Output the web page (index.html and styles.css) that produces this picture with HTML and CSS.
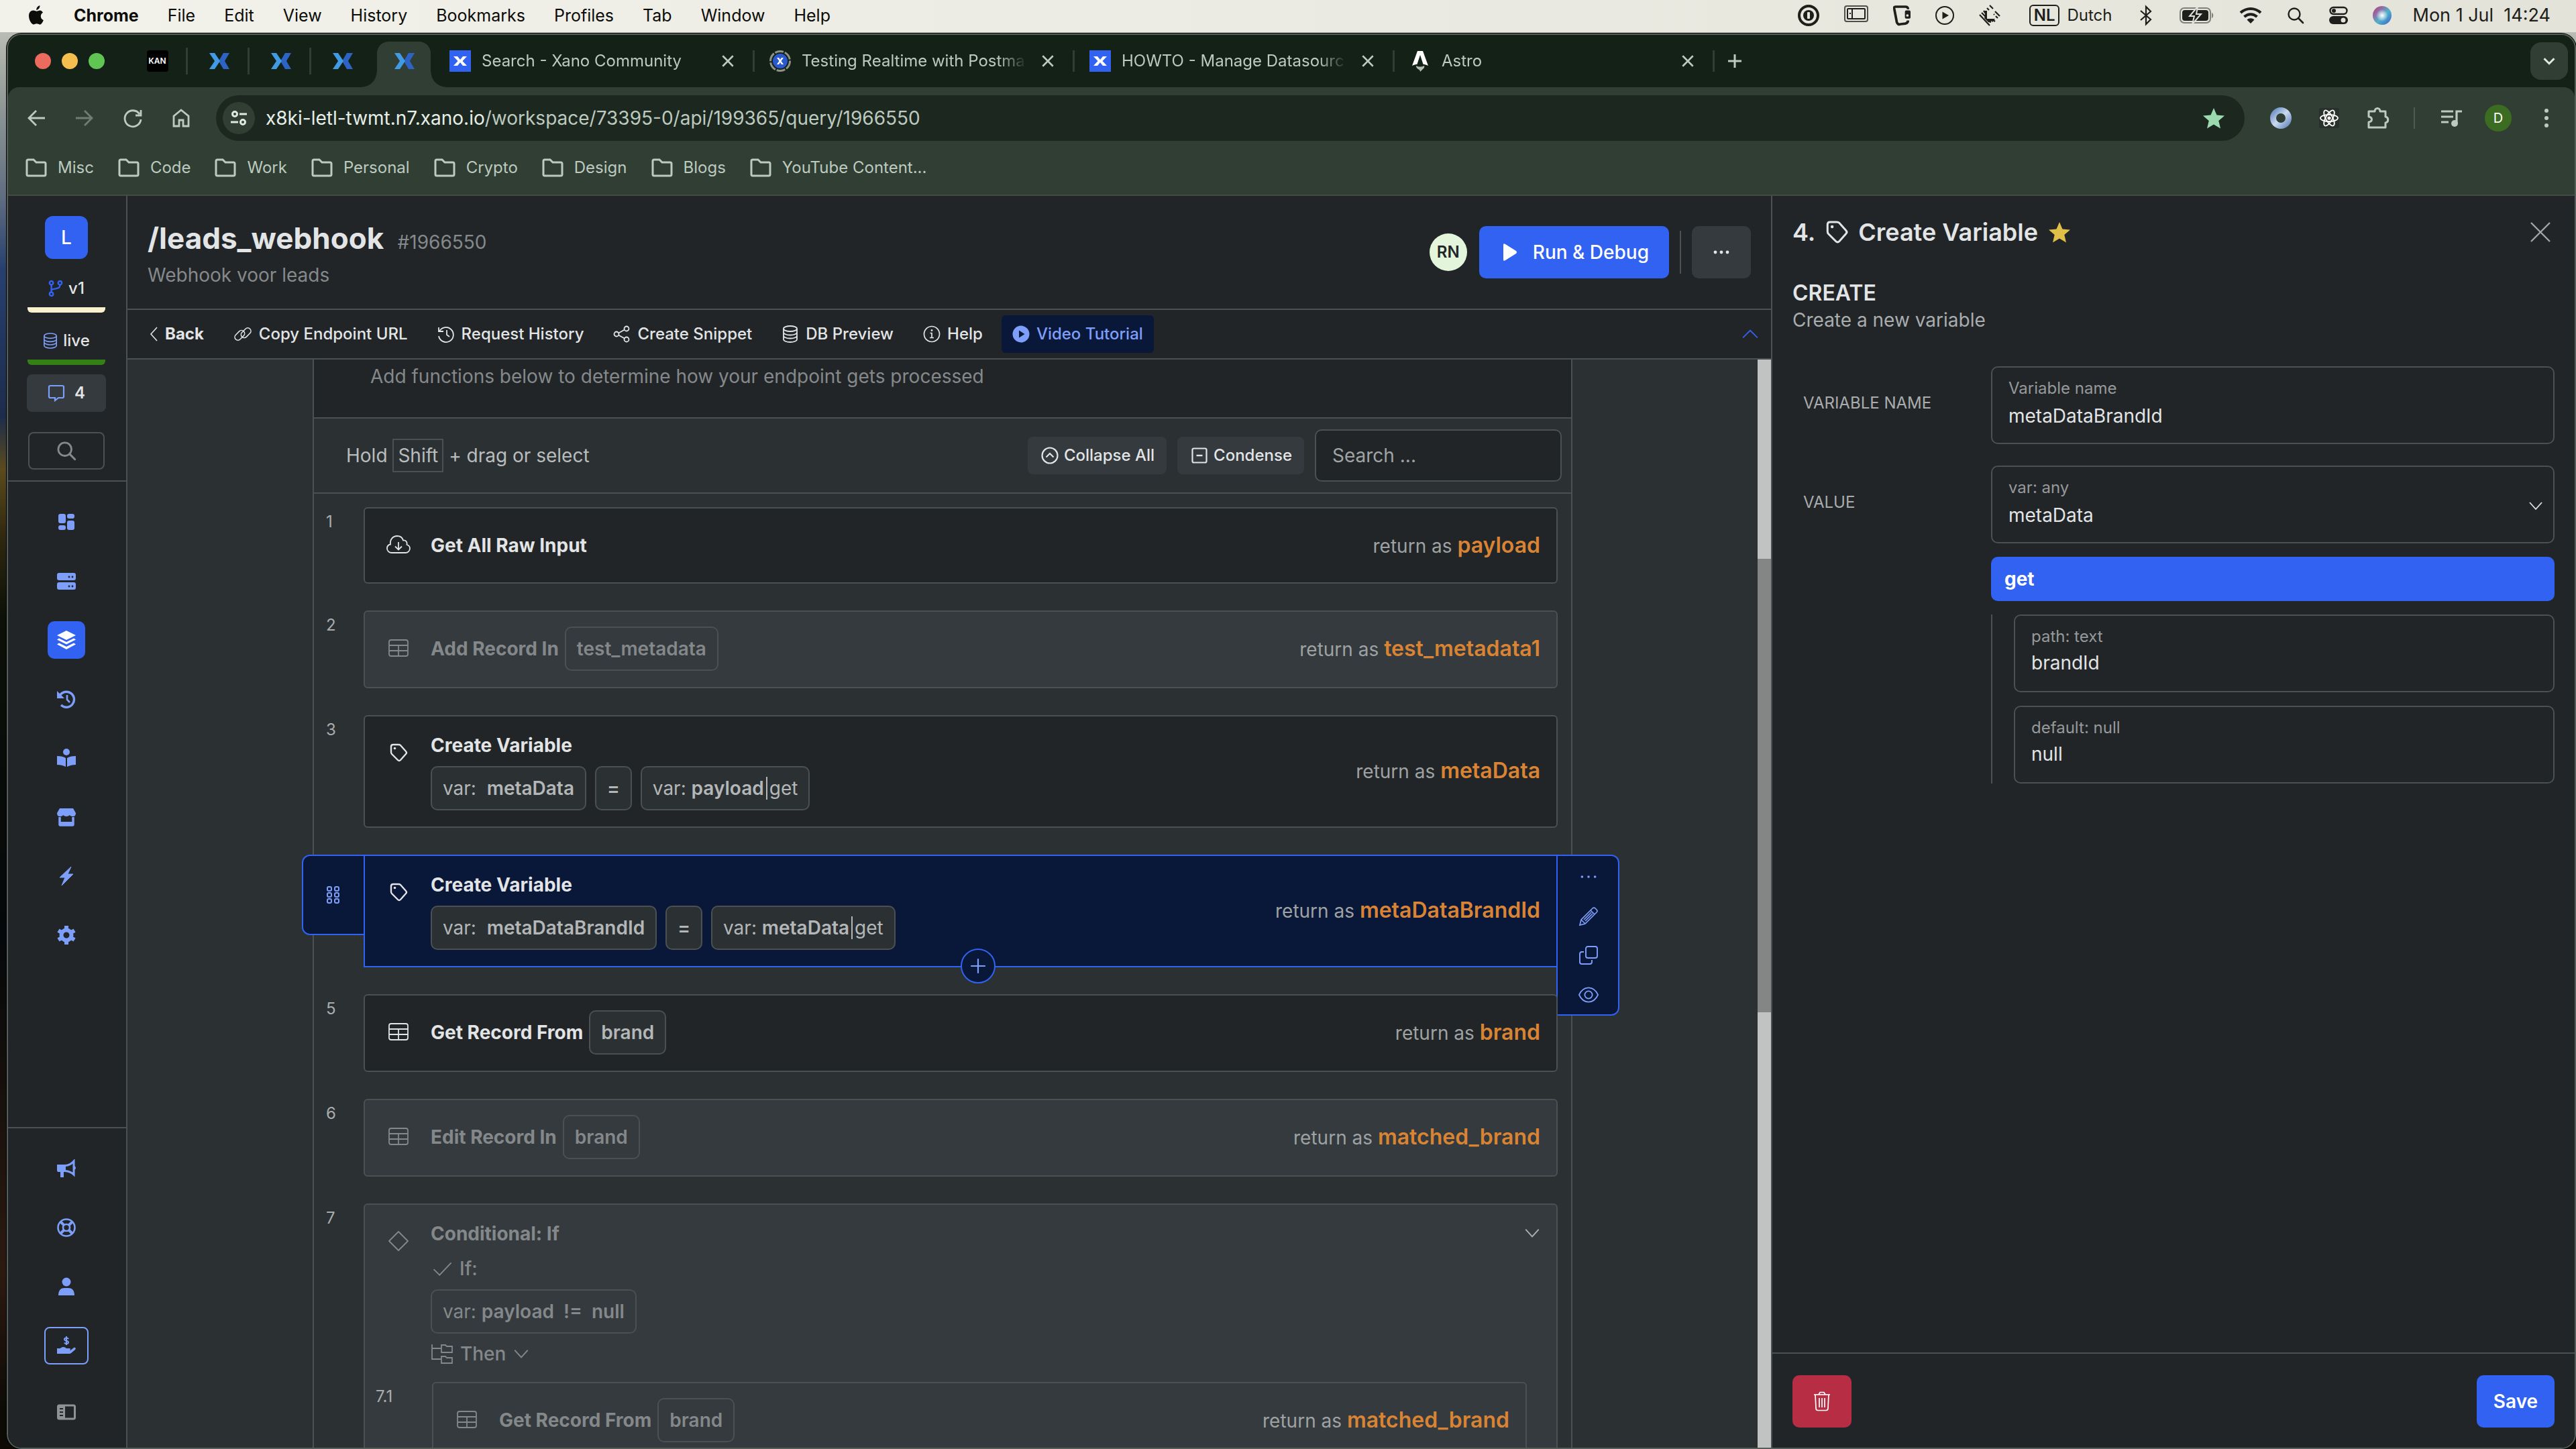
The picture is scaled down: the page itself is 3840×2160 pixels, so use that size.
FILE: index.html
```html
<!DOCTYPE html>
<html lang="en">
<head>
<meta charset="utf-8">
<title>/leads_webhook</title>
<link rel="stylesheet" href="styles.css">
</head>
<body>
<svg class="sprite" aria-hidden="true">
  <defs>
    <linearGradient id="siri-fill" x1="0" y1="0" x2="1" y2="1"><stop offset="0" stop-color="#c0356f"/><stop offset=".3" stop-color="#8f6fa8"/><stop offset=".55" stop-color="#4fb3c8"/><stop offset="1" stop-color="#3b5fd0"/></linearGradient>
    <radialGradient id="siri-glow"><stop offset="0" stop-color="#fff"/><stop offset="1" stop-color="#fff" stop-opacity="0"/></radialGradient>
    <linearGradient id="ring-fill" x1="0" y1="0" x2="1" y2="1"><stop offset="0" stop-color="#6d8fc4"/><stop offset=".5" stop-color="#c9daf0"/><stop offset="1" stop-color="#6f90c2"/></linearGradient>
  </defs>
  <symbol id="i-apple" viewBox="0 0 24 30"><path d="M17.6 7.4c-2.200 0-3.600 1.300-5 1.300S9.500 7.500 7.500 7.500C4.200 7.500 1 10.300 1 15.600 1 22 5 28.500 8 28.500c1.700 0 2.600-1.200 4.700-1.200s2.900 1.200 4.700 1.200c2.300 0 4.500-3.800 5.400-6.600-2.600-1-4-3.100-4-5.700 0-2.400 1.200-4.200 3.200-5.400-1.100-1.800-2.700-3.400-4.400-3.400zM12.300 7c-.2-3.300 2.200-6.200 5.100-6.700.4 3.200-2.300 6.500-5.100 6.700z" fill="currentColor"/></symbol>
  <symbol id="i-onepass" viewBox="0 0 32 32"><circle cx="16" cy="16" r="14" fill="none" stroke="currentColor" stroke-width="4"/><circle cx="16" cy="16" r="8" fill="currentColor"/><rect x="14" y="11" width="4" height="10" rx="1" fill="#e5e5dd"/></symbol>
  <symbol id="i-stage" viewBox="0 0 36 32"><g fill="none" stroke="currentColor" stroke-width="2"><rect x="1" y="2" width="34" height="23" rx="3" opacity=".75"/><rect x="5" y="6" width="26" height="15" rx="1"/><path d="M12 6v15M8 13h2"/></g></symbol>
  <symbol id="i-clip" viewBox="0 0 28 32"><path d="M24 6c0-3-1-4-4-4H4C2 2 1 3 2 6l4 21c1 3 3 4 6 3l8-1c3-1 4-2 4-5" fill="none" stroke="currentColor" stroke-width="4"/><rect x="19" y="8" width="9" height="13" rx="2" fill="currentColor"/><circle cx="23" cy="16" r="2" fill="#e5e5dd"/></symbol>
  <symbol id="i-playc" viewBox="0 0 28 28"><circle cx="14" cy="14" r="13" fill="none" stroke="currentColor" stroke-width="2"/><path d="M10.500 8.500v11l9.500-5.500z" fill="currentColor"/></symbol>
  <symbol id="i-dither" viewBox="0 0 32 32"><path d="M16 1l5 5M12 5l3 3M24 10l7 7M22 14l1 1M25 17l3 3M20 22l4 3M1 15l15 16M4 12l6 6M7 9l3 4" fill="none" stroke="currentColor" stroke-width="2.200"/><path d="M9 9h3v12h12l-4 5-2-2v3l-4-1-6-6 1-3z" fill="currentColor"/></symbol>
  <symbol id="i-bt" viewBox="0 0 26 32"><path d="M5 9l15 13-7 7V3l7 7L5 23" fill="none" stroke="currentColor" stroke-width="2.200"/></symbol>
  <symbol id="i-batt" viewBox="0 0 52 26"><rect x="1" y="2" width="45" height="22" rx="6" fill="none" stroke="currentColor" stroke-width="2" opacity=".5"/><rect x="4" y="5" width="39" height="16" rx="4" fill="currentColor"/><path d="M48 9c3 1 3 7 0 8z" fill="currentColor" opacity=".5"/><path d="M27 0L15 14h7l-3 12 13-15h-7z" fill="currentColor" stroke="#e2e2da" stroke-width="2"/></symbol>
  <symbol id="i-wifi" viewBox="0 0 34 26"><path d="M2 9c9-8 21-8 30 0M7.500 15c6-5 13-5 19 0" fill="none" stroke="currentColor" stroke-width="4.200"/><path d="M11.500 19.500c3-3 8-3 11 0L17 25z" fill="currentColor"/></symbol>
  <symbol id="i-search" viewBox="0 0 26 26"><circle cx="11" cy="11" r="8.500" fill="none" stroke="currentColor" stroke-width="2.400"/><path d="M17 17l7 7" stroke="currentColor" stroke-width="2.600" stroke-linecap="round"/></symbol>
  <symbol id="i-control" viewBox="0 0 28 28"><rect x="1.500" y="2" width="25" height="10" rx="5" fill="none" stroke="currentColor" stroke-width="2.400"/><circle cx="7" cy="7" r="3" fill="currentColor"/><rect x="0" y="15" width="28" height="12" rx="6" fill="currentColor"/><circle cx="21" cy="21" r="3.500" fill="#e2e2da"/></symbol>
  <symbol id="i-siri" viewBox="0 0 28 28"><circle cx="14" cy="14" r="14" fill="url(#siri-fill)"/><circle cx="14" cy="14" r="9" fill="url(#siri-glow)"/></symbol>
  <symbol id="i-xano" viewBox="0 0 32 32"><path d="M31 4h-9l-7 12 7 12h9l-7-12z" fill="#2d63c4"/><path d="M1 4h8l8 12-8 12H1l8-12z" fill="#419be4"/></symbol>
  <symbol id="i-xwhite" viewBox="0 0 32 32"><path d="M6 9h6l4 5 4-5h6l-6.500 7 6.500 7h-6l-4-5-4 5H6l6.500-7z" fill="#fff"/></symbol>
  <symbol id="i-badge" viewBox="0 0 32 32"><circle cx="16" cy="16" r="14.500" fill="none" stroke="#8f9387" stroke-width="3" stroke-dasharray="13 2"/><circle cx="16" cy="16" r="11" fill="#2b5ad0"/><path d="M11 11h3l2 3 2-3h3l-3.500 5 3.500 5h-3l-2-3-2 3h-3l3.500-5z" fill="#fff"/></symbol>
  <symbol id="i-astro" viewBox="0 0 26 32"><path d="M9 1h8l8 22c-3-1.500-5-2-7.500-2.300L13 7 8.500 20.700C6 21 4 21.500 1 23z" fill="#fff"/><path d="M7 23c4 2 8 2 12 0 1 3-1 4-3 6l-3 3c0-2-1-3-3-4s-3-3-3-5z" fill="#b8bcb9"/></symbol>
  <symbol id="i-close" viewBox="0 0 20 20"><path d="M3 3l14 14M17 3L3 17" stroke="currentColor" stroke-width="2.400"/></symbol>
  <symbol id="i-thinx" viewBox="0 0 30 30"><path d="M1 1l28 28M29 1L1 29" stroke="currentColor" stroke-width="2.400"/></symbol>
  <symbol id="i-plus" viewBox="0 0 24 24"><path d="M12 2v20M2 12h20" stroke="currentColor" stroke-width="2"/></symbol>
  <symbol id="i-boldplus" viewBox="0 0 24 24"><path d="M12 2v20M2 12h20" stroke="currentColor" stroke-width="3"/></symbol>
  <symbol id="i-down" viewBox="0 0 24 24"><path d="M3 7l9 10 9-10" fill="none" stroke="currentColor" stroke-width="1.800"/></symbol>
  <symbol id="i-bolddown" viewBox="0 0 24 24"><path d="M2 7l10 10L22 7" fill="none" stroke="currentColor" stroke-width="4"/></symbol>
  <symbol id="i-up" viewBox="0 0 24 24"><path d="M2 17L12 7l10 10" fill="none" stroke="currentColor" stroke-width="1.800"/></symbol>
  <symbol id="i-left" viewBox="0 0 14 24"><path d="M12 2L3 12l9 10" fill="none" stroke="currentColor" stroke-width="1.600"/></symbol>
  <symbol id="i-arrow" viewBox="0 0 32 32"><path d="M29 16H5M16 5L5 16l11 11" fill="none" stroke="currentColor" stroke-width="2.800"/></symbol>
  <symbol id="i-reload" viewBox="0 0 32 32"><path d="M26 10a12 12 0 1 0 2 8M28 4v8h-8" fill="none" stroke="currentColor" stroke-width="2.800"/></symbol>
  <symbol id="i-home" viewBox="0 0 32 32"><path d="M5 13L16 4l11 9v15h-8v-9h-6v9H5z" fill="none" stroke="currentColor" stroke-width="2.800"/></symbol>
  <symbol id="i-tune" viewBox="0 0 28 28"><g fill="none" stroke="currentColor" stroke-width="3"><circle cx="8" cy="8" r="3.500"/><path d="M15 8h11M2 20h11"/><circle cx="20" cy="20" r="3.500"/></g></symbol>
  <symbol id="i-star" viewBox="0 0 32 32"><path d="M16 1l4.500 10.600L32 12.600l-8.700 7.500L26 31.500l-10-6-10 6 2.700-11.400L0 12.600l11.500-1z" fill="currentColor"/></symbol>
  <symbol id="i-ring" viewBox="0 0 36 36"><circle cx="18" cy="18" r="11.500" fill="none" stroke="url(#ring-fill)" stroke-width="9"/></symbol>
  <symbol id="i-react" viewBox="0 0 36 36"><rect x="3" y="3" width="30" height="30" rx="3" fill="#2a302c"/><g fill="none" stroke="#fff" stroke-width="1.800"><ellipse cx="18" cy="18" rx="13" ry="5"/><ellipse cx="18" cy="18" rx="13" ry="5" transform="rotate(60 18 18)"/><ellipse cx="18" cy="18" rx="13" ry="5" transform="rotate(120 18 18)"/></g><circle cx="18" cy="18" r="2.600" fill="#fff"/></symbol>
  <symbol id="i-puzzle" viewBox="0 0 36 36"><path d="M5 8h9c0-6 8-6 8 0h8v8c5 1 5 8 0 9v7H5v-8c6-1 6-7 0-8z" fill="none" stroke="currentColor" stroke-width="3" stroke-linejoin="round"/></symbol>
  <symbol id="i-music" viewBox="0 0 36 36"><path d="M3 8h18M3 16h18M3 24h11M26 26V8h8" fill="none" stroke="currentColor" stroke-width="3.200"/><circle cx="23" cy="26" r="5" fill="currentColor"/></symbol>
  <symbol id="i-vdots" viewBox="0 0 28 32"><g fill="currentColor"><circle cx="14" cy="5" r="3"/><circle cx="14" cy="16" r="3"/><circle cx="14" cy="27" r="3"/></g></symbol>
  <symbol id="i-folder" viewBox="0 0 32 28"><path d="M2 24V4q0-2 2-2h8l4 4h12q2 0 2 2v16q0 2-2 2H4q-2 0-2-2z" fill="none" stroke="currentColor" stroke-width="3"/></symbol>

  <symbol id="i-branch" viewBox="0 0 24 28"><g fill="none" stroke="currentColor" stroke-width="2.600"><circle cx="5" cy="5" r="3"/><circle cx="19" cy="5" r="3"/><circle cx="5" cy="23" r="3"/><path d="M5 8v12M19 8c0 8-7 5-14 8"/></g></symbol>
  <symbol id="i-db" viewBox="0 0 24 26"><g fill="none" stroke="currentColor" stroke-width="1.800"><ellipse cx="12" cy="5" rx="10" ry="4"/><path d="M2 5v16c0 2 4 4 10 4s10-2 10-4V5M2 10.500c0 2 4 4 10 4s10-2 10-4M2 15.500c0 2 4 4 10 4s10-2 10-4"/></g></symbol>
  <symbol id="i-chat" viewBox="0 0 26 26"><path d="M4 2h18q2 0 2 2v14q0 2-2 2h-6l-5 4v-4H4q-2 0-2-2V4q0-2 2-2z" fill="none" stroke="currentColor" stroke-width="2.200"/></symbol>
  <symbol id="i-dash" viewBox="0 0 28 28"><g fill="currentColor"><rect x="2" y="2" width="11" height="14" rx="3"/><rect x="2" y="19" width="11" height="7" rx="3"/><rect x="15" y="2" width="11" height="7" rx="3"/><rect x="15" y="12" width="11" height="14" rx="3"/></g></symbol>
  <symbol id="i-server" viewBox="0 0 28 28"><rect y="2" width="28" height="11" rx="3" fill="currentColor"/><rect y="16" width="28" height="11" rx="3" fill="currentColor"/><g fill="#212527"><circle cx="18" cy="8" r="1.400"/><circle cx="23" cy="8" r="1.400"/><circle cx="18" cy="22" r="1.400"/><circle cx="23" cy="22" r="1.400"/></g></symbol>
  <symbol id="i-layers" viewBox="0 0 28 28"><g fill="currentColor"><path d="M14 0l14 7-14 7L0 7z"/><path d="M3 11.500l11 5.500 11-5.500 3 2-14 7-14-7z"/><path d="M3 18.500L14 24l11-5.500 3 2-14 7.500-14-7.500z"/></g></symbol>
  <symbol id="i-history" viewBox="0 0 28 28"><path d="M4 9a11.500 11.500 0 1 1 2 14" fill="none" stroke="currentColor" stroke-width="3.400"/><path d="M0 2v11h11z" fill="currentColor"/><path d="M15 8v7l4 4" fill="none" stroke="currentColor" stroke-width="2.600"/></symbol>
  <symbol id="i-reader" viewBox="0 0 28 28"><g fill="currentColor"><circle cx="14" cy="5" r="5"/><path d="M13 14v13C9 25 5 24 0 24V11c6 0 10 1 13 3zM15 14v13c4-2 8-3 13-3V11c-6 0-10 1-13 3z"/></g></symbol>
  <symbol id="i-store" viewBox="0 0 28 28"><path d="M4 1h20l4 7q0 5-4 5t-5-2q-2 2-5 2t-5-2q-1 2-5 2t-4-5z" fill="currentColor"/><path d="M4 14v11q0 1 1 1h18q1 0 1-1V14" fill="none" stroke="currentColor" stroke-width="3.500"/><path d="M4 21h20v4H4z" fill="currentColor"/></symbol>
  <symbol id="i-bolt" viewBox="0 0 28 28"><path d="M21 0L4 16h8L7 28l17-17h-8z" fill="currentColor" stroke="currentColor" stroke-linejoin="round"/></symbol>
  <symbol id="i-gear" viewBox="0 0 28 28"><circle cx="14" cy="14" r="7.500" fill="none" stroke="currentColor" stroke-width="6"/><path d="M14 0v5M14 23v5M2 7l4 2.500M22 18.500l4 2.500M2 21l4-2.500M22 9.500L26 7" stroke="currentColor" stroke-width="6"/></symbol>
  <symbol id="i-horn" viewBox="0 0 28 28"><path d="M0 8h13v11h-3v8H5v-8H2q-2 0-2-3z" fill="currentColor"/><path d="M12 9.500Q20 9 25 3v20q-5-5-13-5.500" fill="none" stroke="currentColor" stroke-width="3"/><path d="M26 10q4 3 0 6z" fill="currentColor"/></symbol>
  <symbol id="i-ringbuoy" viewBox="0 0 28 28"><g fill="none" stroke="currentColor" stroke-width="2.600"><circle cx="14" cy="14" r="12.500"/><circle cx="14" cy="14" r="5"/><path d="M5 5l5.500 5.500M23 5l-5.500 5.500M5 23l5.500-5.500M23 23l-5.500-5.500" stroke-width="4"/></g></symbol>
  <symbol id="i-user" viewBox="0 0 28 28"><circle cx="14" cy="7" r="6.500" fill="currentColor"/><path d="M2 27c0-8 4-11 9-11h6c5 0 9 3 9 11z" fill="currentColor"/></symbol>
  <symbol id="i-handusd" viewBox="0 0 28 28"><path d="M0 18h5c3-3 7-2 9 0h5c2 1 1 3-1 3h-5 7l5-4c2-1 4 1 2 3l-6 5q-1 1-3 1H0z" fill="currentColor"/><path d="M17 4c-1-2-6-2-6 .5 0 3 6 1.500 6 4.500 0 2.500-5 2.500-6 .5M14 0v13" fill="none" stroke="currentColor" stroke-width="2"/></symbol>
  <symbol id="i-sidebar" viewBox="0 0 28 26"><rect x="1.500" y="3" width="25" height="20" rx="2" fill="none" stroke="currentColor" stroke-width="3"/><rect x="1" y="2" width="11" height="22" fill="currentColor"/><path d="M4 8h5M4 13h5M4 18h5" stroke="#212527" stroke-width="2"/></symbol>

  <symbol id="i-link" viewBox="0 0 30 26"><g fill="none" stroke="currentColor" stroke-width="1.700"><rect x="-9" y="-5" width="18" height="10" rx="5" transform="translate(10 15) rotate(-45)"/><rect x="-9" y="-5" width="18" height="10" rx="5" transform="translate(20 11) rotate(-45)"/></g></symbol>
  <symbol id="i-hist" viewBox="0 0 26 26"><path d="M2 3v6h7M3 9a11 11 0 1 1-1 7M14 7v7l4 3" fill="none" stroke="currentColor" stroke-width="1.800"/></symbol>
  <symbol id="i-share" viewBox="0 0 26 26"><g fill="none" stroke="currentColor" stroke-width="1.800"><circle cx="5" cy="13" r="3.500"/><circle cx="20" cy="5" r="3.500"/><circle cx="20" cy="21" r="3.500"/><path d="M8 11.500l9-5M8 14.500l9 5"/></g></symbol>
  <symbol id="i-info" viewBox="0 0 26 26"><circle cx="13" cy="13" r="11.500" fill="none" stroke="currentColor" stroke-width="1.700"/><path d="M10.500 11.500H13V18M10 18.500h6" fill="none" stroke="currentColor" stroke-width="1.700"/><circle cx="13" cy="7.500" r="1.400" fill="currentColor"/></symbol>
  <symbol id="i-playfill" viewBox="0 0 26 26"><circle cx="13" cy="13" r="12.500" fill="currentColor"/><path d="M10 7.500v11l8.500-5.500z" fill="#091739"/></symbol>
  <symbol id="i-play" viewBox="0 0 24 28"><path d="M2 3q0-3 3-1l16 10q2 2 0 4L5 26q-3 2-3-1z" fill="currentColor"/></symbol>
  <symbol id="i-dots" viewBox="0 0 28 8"><g fill="currentColor"><circle cx="5" cy="4" r="2.400"/><circle cx="14" cy="4" r="2.400"/><circle cx="23" cy="4" r="2.400"/></g></symbol>
  <symbol id="i-finedots" viewBox="0 0 28 8"><g fill="currentColor"><circle cx="5" cy="4" r="1.700"/><circle cx="14" cy="4" r="1.700"/><circle cx="23" cy="4" r="1.700"/></g></symbol>
  <symbol id="i-upc" viewBox="0 0 26 26"><circle cx="13" cy="13" r="11.500" fill="none" stroke="currentColor" stroke-width="2.200"/><path d="M7.500 15.500L13 10l5.500 5.500" fill="none" stroke="currentColor" stroke-width="2.200"/></symbol>
  <symbol id="i-minus" viewBox="0 0 26 26"><rect x="2.500" y="2.500" width="21" height="21" rx="2" fill="none" stroke="currentColor" stroke-width="2.200"/><path d="M8.500 13h9" stroke="currentColor" stroke-width="2.400"/></symbol>
  <symbol id="i-cloud" viewBox="0 0 36 32"><path d="M8 28c-4 0-7-3-7-6.500 0-3 2-5.500 5-6C5 8 10 3 16 3c5 0 8 3 9 6.500 4-.5 6.500 2.500 5.500 6.500 3 1 4.500 3 4.500 5.500 0 3.500-3 6.500-6.500 6.500zM18 12v11M13 18.500l5 5 5-5" fill="none" stroke="currentColor" stroke-width="1.800"/></symbol>
  <symbol id="i-table" viewBox="0 0 32 32"><path d="M5 4h22q3 0 3 3v18q0 3-3 3H5q-3 0-3-3V7q0-3 3-3zM2 12h28M2 20h28M16 12v16" fill="none" stroke="currentColor" stroke-width="1.800"/></symbol>
  <symbol id="i-tag" viewBox="0 0 32 32"><path d="M5 7q0-3 3-3h8q2 0 3 1l8 9q2 2 0 4l-8 9q-2 2-4 0l-9-9q-1-1-1-3z" fill="none" stroke="currentColor" stroke-width="2.400"/><circle cx="10.500" cy="9.500" r="1.800" fill="currentColor"/></symbol>
  <symbol id="i-diamond" viewBox="0 0 32 32"><path d="M16 2l14 14-14 14L2 16z" fill="none" stroke="currentColor" stroke-width="1.800" stroke-linejoin="round"/></symbol>
  <symbol id="i-check" viewBox="0 0 30 24"><path d="M4 13l8 8L28 4" fill="none" stroke="currentColor" stroke-width="1.700"/></symbol>
  <symbol id="i-tree" viewBox="0 0 34 32"><path d="M2 2v22h13M2 8h13M16 3h6l2 2h8v9H16zM16 20h6l2 2h8v8H16z" fill="none" stroke="currentColor" stroke-width="1.800"/></symbol>
  <symbol id="i-grip" viewBox="0 0 20 28"><g fill="none" stroke="currentColor" stroke-width="2"><rect x="1" y="2" width="6" height="6" rx="2"/><rect x="12" y="2" width="6" height="6" rx="2"/><rect x="1" y="11" width="6" height="6" rx="2"/><rect x="12" y="11" width="6" height="6" rx="2"/><rect x="1" y="20" width="6" height="6" rx="2"/><rect x="12" y="20" width="6" height="6" rx="2"/></g></symbol>
  <symbol id="i-pencil" viewBox="0 0 30 30"><path d="M2 28l2-8L21 3q2-2 4 0l2 2q2 2 0 4L10 26zM18 6l6 6M4 20l6 6M8 20L19 9M10 22l11-11" fill="none" stroke="currentColor" stroke-width="1.700"/></symbol>
  <symbol id="i-copy" viewBox="0 0 30 30"><g fill="none" stroke="currentColor" stroke-width="1.900"><rect x="11" y="2" width="17" height="17" rx="3"/><path d="M8 10H5q-3 0-3 3v12q0 3 3 3h12q3 0 3-3v-3"/></g></symbol>
  <symbol id="i-eye" viewBox="0 0 32 28"><path d="M1 14C8-1 24-1 31 14 24 29 8 29 1 14z" fill="none" stroke="currentColor" stroke-width="1.900"/><circle cx="16" cy="14" r="6" fill="none" stroke="currentColor" stroke-width="1.900"/></symbol>
  <symbol id="i-trash" viewBox="0 0 26 30"><path d="M1 5h24M8 5l2-3.500h6L18 5M3 5l1 20q0 3.500 3 3.500h12q3 0 3-3.500l1-20M9 10v14M13 10v14M17 10v14" fill="none" stroke="currentColor" stroke-width="1.700"/></symbol>
</svg>

<header class="menubar">
  <nav class="menus">
    <svg class="apple"><use href="#i-apple"/></svg>
    <strong>Chrome</strong><span>File</span><span>Edit</span><span>View</span><span>History</span><span>Bookmarks</span><span>Profiles</span><span>Tab</span><span>Window</span><span>Help</span>
  </nav>
  <div class="status">
    <svg class="w32"><use href="#i-onepass"/></svg>
    <svg class="w36"><use href="#i-stage"/></svg>
    <svg class="w26"><use href="#i-clip"/></svg>
    <svg class="w28"><use href="#i-playc"/></svg>
    <svg class="w32"><use href="#i-dither"/></svg>
    <span class="lang"><b>NL</b>Dutch</span>
    <svg class="w26"><use href="#i-bt"/></svg>
    <svg class="w52"><use href="#i-batt"/></svg>
    <svg class="w34"><use href="#i-wifi"/></svg>
    <svg class="w26"><use href="#i-search"/></svg>
    <svg class="w28"><use href="#i-control"/></svg>
    <span class="clock"><svg class="w28"><use href="#i-siri"/></svg><time>Mon 1 Jul&nbsp; 14:24</time></span>
  </div>
</header>

<div class="window">
  <div class="tabstrip">
    <div class="lights"><i class="red"></i><i class="yellow"></i><i class="green"></i></div>
    <div class="pin"><span class="kan">KAN</span></div>
    <div class="pin"><svg class="w32"><use href="#i-xano"/></svg></div>
    <div class="pin"><svg class="w32"><use href="#i-xano"/></svg></div>
    <div class="pin last"><svg class="w32"><use href="#i-xano"/></svg></div>
    <div class="pin active"><svg class="shape" viewBox="0 0 128 68"><path d="M0 68q22-2 24-24V16Q26 2 40 0h48q14 2 16 16v28q2 22 24 24z" fill="#303e34"/></svg><svg class="w32 front"><use href="#i-xano"/></svg></div>
    <div class="tab"><svg class="w32 bluebg"><use href="#i-xwhite"/></svg><span>Search - Xano Community</span><button aria-label="Close tab"><svg><use href="#i-close"/></svg></button></div>
    <div class="tab"><svg class="w32"><use href="#i-badge"/></svg><span>Testing Realtime with Postma</span><button aria-label="Close tab"><svg><use href="#i-close"/></svg></button></div>
    <div class="tab"><svg class="w32 bluebg"><use href="#i-xwhite"/></svg><span>HOWTO - Manage Datasourc</span><button aria-label="Close tab"><svg><use href="#i-close"/></svg></button></div>
    <div class="tab"><svg class="w32"><use href="#i-astro"/></svg><span>Astro</span><button aria-label="Close tab"><svg><use href="#i-close"/></svg></button></div>
    <button class="newtab" aria-label="New tab"><svg><use href="#i-boldplus"/></svg></button>
    <button class="tabsearch" aria-label="Search tabs"><svg><use href="#i-bolddown"/></svg></button>
  </div>

  <div class="chrome">
    <div class="addressrow">
      <div class="nav">
        <svg><use href="#i-arrow"/></svg><svg class="forward"><use href="#i-arrow"/></svg><svg><use href="#i-reload"/></svg><svg><use href="#i-home"/></svg>
      </div>
      <div class="omnibox">
        <span class="site"><svg><use href="#i-tune"/></svg></span>
        <span class="url"><em>x8ki-letl-twmt.n7.xano.io</em>/workspace/73395-0/api/199365/query/1966550</span>
        <svg class="fav"><use href="#i-star"/></svg>
      </div>
      <div class="ext">
        <svg><use href="#i-ring"/></svg><svg><use href="#i-react"/></svg><svg><use href="#i-puzzle"/></svg><i></i><svg><use href="#i-music"/></svg><span class="profile">D</span><svg class="kebab"><use href="#i-vdots"/></svg>
      </div>
    </div>
    <nav class="bookmarks">
      <a href="#"><svg><use href="#i-folder"/></svg>Misc</a><a href="#"><svg><use href="#i-folder"/></svg>Code</a><a href="#"><svg><use href="#i-folder"/></svg>Work</a><a href="#"><svg><use href="#i-folder"/></svg>Personal</a><a href="#"><svg><use href="#i-folder"/></svg>Crypto</a><a href="#"><svg><use href="#i-folder"/></svg>Design</a><a href="#"><svg><use href="#i-folder"/></svg>Blogs</a><a href="#"><svg><use href="#i-folder"/></svg>YouTube Content...</a>
    </nav>
  </div>

  <div class="app">
    <aside class="rail">
      <div class="railtop">
        <button class="space">L</button>
        <button class="env v1"><svg><use href="#i-branch"/></svg>v1</button>
        <button class="env live"><svg><use href="#i-db"/></svg>live</button>
        <button class="chat"><svg><use href="#i-chat"/></svg>4</button>
        <button class="find" aria-label="Search"><svg><use href="#i-search"/></svg></button>
      </div>
      <nav class="railnav">
        <a href="#" aria-label="Dashboard"><svg><use href="#i-dash"/></svg></a>
        <a href="#" aria-label="Database"><svg><use href="#i-server"/></svg></a>
        <a href="#" aria-label="API" class="on"><svg><use href="#i-layers"/></svg></a>
        <a href="#" aria-label="History"><svg><use href="#i-history"/></svg></a>
        <a href="#" aria-label="Library"><svg><use href="#i-reader"/></svg></a>
        <a href="#" aria-label="Marketplace"><svg><use href="#i-store"/></svg></a>
        <a href="#" aria-label="Triggers"><svg><use href="#i-bolt"/></svg></a>
        <a href="#" aria-label="Settings"><svg><use href="#i-gear"/></svg></a>
      </nav>
      <nav class="railnav foot">
        <a href="#" aria-label="News"><svg><use href="#i-horn"/></svg></a>
        <a href="#" aria-label="Support"><svg><use href="#i-ringbuoy"/></svg></a>
        <a href="#" aria-label="Account"><svg><use href="#i-user"/></svg></a>
        <a href="#" aria-label="Referrals" class="boxed"><svg><use href="#i-handusd"/></svg></a>
        <a href="#" aria-label="Toggle sidebar" class="grey"><svg><use href="#i-sidebar"/></svg></a>
      </nav>
    </aside>

    <main class="main">
      <header class="pagehead">
        <div class="titles">
          <h1>/leads_webhook <small>#1966550</small></h1>
          <p>Webhook voor leads</p>
        </div>
        <div class="headactions">
          <span class="avatar">RN</span>
          <button class="run"><svg><use href="#i-play"/></svg>Run &amp; Debug</button>
          <i></i>
          <button class="more" aria-label="More"><svg><use href="#i-dots"/></svg></button>
        </div>
      </header>

      <nav class="tools">
        <button class="back"><svg class="slim"><use href="#i-left"/></svg>Back</button>
        <button><svg class="wide"><use href="#i-link"/></svg>Copy Endpoint URL</button>
        <button><svg><use href="#i-hist"/></svg>Request History</button>
        <button><svg><use href="#i-share"/></svg>Create Snippet</button>
        <button><svg><use href="#i-db"/></svg>DB Preview</button>
        <button><svg><use href="#i-info"/></svg>Help</button>
        <button class="video"><svg><use href="#i-playfill"/></svg>Video Tutorial</button>
        <button class="fold" aria-label="Collapse"><svg><use href="#i-up"/></svg></button>
      </nav>

      <div class="canvas">
        <div class="scroller">
          <section class="stack">
            <p class="intro">Add functions below to determine how your endpoint gets processed</p>
            <div class="filter">
              <p>Hold <kbd>Shift</kbd> + drag or select</p>
              <button><svg><use href="#i-upc"/></svg>Collapse All</button>
              <button><svg><use href="#i-minus"/></svg>Condense</button>
              <input type="search" placeholder="Search ..." aria-label="Search functions">
            </div>

            <ol class="steps">
              <li class="step"><span class="num">1</span>
                <article class="card plain"><svg class="kind cloud"><use href="#i-cloud"/></svg><div class="body"><div class="line"><h2>Get All Raw Input</h2></div></div><p class="ret">return as <b>payload</b></p></article></li>
              <li class="step"><span class="num">2</span>
                <article class="card off"><svg class="kind"><use href="#i-table"/></svg><div class="body"><div class="line"><h2>Add Record In</h2><span class="chip"><b>test_metadata</b></span></div></div><p class="ret">return as <b>test_metadata1</b></p></article></li>
              <li class="step"><span class="num">3</span>
                <article class="card"><svg class="kind"><use href="#i-tag"/></svg><div class="body"><h2>Create Variable</h2><div class="chips"><span class="chip">var:&nbsp; <b>metaData</b></span><span class="chip"><b>=</b></span><span class="chip">var: <b>payload</b><i></i>get</span></div></div><p class="ret">return as <b>metaData</b></p></article></li>
              <li class="step"><span class="num"></span>
                <article class="card selected"><svg class="kind"><use href="#i-tag"/></svg><div class="body"><h2>Create Variable</h2><div class="chips"><span class="chip">var:&nbsp; <b>metaDataBrandId</b></span><span class="chip"><b>=</b></span><span class="chip">var: <b>metaData</b><i></i>get</span></div></div><p class="ret">return as <b>metaDataBrandId</b></p>
                  <button class="grip" aria-label="Drag"><svg><use href="#i-grip"/></svg></button>
                  <button class="add" aria-label="Add step"><svg><use href="#i-plus"/></svg></button>
                  <div class="actions">
                    <button aria-label="More"><svg><use href="#i-finedots"/></svg></button>
                    <button aria-label="Edit"><svg><use href="#i-pencil"/></svg></button>
                    <button aria-label="Duplicate"><svg><use href="#i-copy"/></svg></button>
                    <button aria-label="Disable"><svg><use href="#i-eye"/></svg></button>
                  </div>
                </article></li>
              <li class="step"><span class="num">5</span>
                <article class="card"><svg class="kind"><use href="#i-table"/></svg><div class="body"><div class="line"><h2>Get Record From</h2><span class="chip"><b>brand</b></span></div></div><p class="ret">return as <b>brand</b></p></article></li>
              <li class="step"><span class="num">6</span>
                <article class="card off"><svg class="kind"><use href="#i-table"/></svg><div class="body"><div class="line"><h2>Edit Record In</h2><span class="chip"><b>brand</b></span></div></div><p class="ret">return as <b>matched_brand</b></p></article></li>
              <li class="step"><span class="num">7</span>
                <article class="card off branch">
                  <div class="cond"><svg class="kind"><use href="#i-diamond"/></svg>
                    <div class="body"><h2>Conditional: If</h2>
                      <p class="if"><svg><use href="#i-check"/></svg>If:</p>
                      <div class="chips"><span class="chip">var: <b>payload &nbsp;!= &nbsp;null</b></span></div>
                      <p class="then"><svg><use href="#i-tree"/></svg>Then<svg class="chev"><use href="#i-down"/></svg></p></div>
                    <svg class="toggle"><use href="#i-down"/></svg></div>
                  <div class="step nested"><span class="num">7.1</span>
                    <div class="card off"><svg class="kind"><use href="#i-table"/></svg><div class="body"><div class="line"><h2>Get Record From</h2><span class="chip"><b>brand</b></span></div></div><p class="ret">return as <b>matched_brand</b></p></div></div>
                </article></li>
            </ol>
          </section>
        </div>
        <div class="bar"><i></i></div>
      </div>
    </main>

    <aside class="panel">
      <div class="panelbody">
        <header><h2>4. <svg><use href="#i-tag"/></svg>Create Variable<svg class="gold"><use href="#i-star"/></svg></h2><button aria-label="Close"><svg><use href="#i-thinx"/></svg></button></header>
        <h3>CREATE</h3>
        <p>Create a new variable</p>
        <form class="form">
          <label class="name" for="varname">VARIABLE NAME</label>
          <div class="field"><label for="varname">Variable name</label><input id="varname" value="metaDataBrandId"></div>
          <label class="name" for="varvalue">VALUE</label>
          <div class="field"><label for="varvalue">var: any</label><select id="varvalue"><option>metaData</option></select><svg><use href="#i-down"/></svg></div>
          <div class="filterset">
            <button type="button" class="get">get</button>
            <div class="params">
              <div class="field"><label for="path">path: text</label><input id="path" value="brandId"></div>
              <div class="field"><label for="default">default: null</label><input id="default" value="null"></div>
            </div>
          </div>
        </form>
      </div>
      <footer><button class="delete" aria-label="Delete"><svg><use href="#i-trash"/></svg></button><button class="save">Save</button></footer>
    </aside>
  </div>
</div>
</body>
</html>
```
FILE: styles.css
```css
* { box-sizing: border-box; }
:root {
  --bg: #212527;
  --mid: #2b3033;
  --raised: #343a3d;
  --line: #4b5053;
  --text: #e2e4e5;
  --soft: #a9adae;
  --muted: #85898b;
  --blue: #3262f1;
  --sky: #7d9ff9;
  --navy: #091739;
  --orange: #d98434;
}
body {
  margin: 0;
  height: 100vh;
  display: flex;
  flex-direction: column;
  overflow: hidden;
  font-family: Inter, "Liberation Sans", sans-serif;
  font-size: 28px;
  line-height: 40px;
  color: var(--text);
  background: linear-gradient(180deg, #b9bcb2 48px, #8f9795 160px, #5d6b80 300px, #27406f 400px, #1c2c4c 620px, #5b4a1c 700px, #30280f 800px, #0c1008 920px, #05080a 1400px, #2c1a10 1900px, #0d0a06 2100px);
}
h1, h2, h3, p, ol { margin: 0; padding: 0; }
button { font: inherit; color: inherit; background: none; border: 0; padding: 0; margin: 0; }
a { color: inherit; text-decoration: none; }
input, select { font: inherit; color: inherit; }
svg { flex: none; display: block; }
b { font-weight: 600; }
.sprite { position: absolute; width: 0; height: 0; }
.w26 { width: 26px; height: 32px; }
.w28 { width: 28px; height: 28px; }
.w32 { width: 32px; height: 32px; }
.w34 { width: 34px; height: 28px; }
.w36 { width: 36px; height: 32px; }
.w52 { width: 52px; height: 26px; }

/* macOS menu bar */
.menubar {
  height: 48px;
  flex: none;
  display: flex;
  justify-content: space-between;
  align-items: center;
  padding: 0 38px 2px 41px;
  font-size: 25px;
  color: #0c0c0a;
  background: linear-gradient(90deg, #f2f2ea, #e3e3da);
}
.menus, .status { display: flex; align-items: center; gap: 43px; white-space: nowrap; }
.status { gap: 37px; color: #1e1e1a; }
.apple { width: 26px; height: 30px; }
.lang { display: flex; align-items: center; gap: 11px; font-size: 24px; padding-left: 6px; }
.lang b { border: 2px solid #1e1e1a; border-radius: 6px; line-height: 28px; padding: 0 5px; }
.clock { display: flex; align-items: center; gap: 32px; font-size: 27px; }

/* Browser window */
.window {
  flex: 1;
  min-height: 0;
  margin: 2px 0 0 10px;
  display: flex;
  flex-direction: column;
  border: 2px solid #555e59;
  border-radius: 22px;
  overflow: hidden;
  background: #142117;
  box-shadow: 0 0 0 1px #000;
  color: #bccabf;
}
.tabstrip { height: 78px; flex: none; display: flex; align-items: center; font-size: 24px; }
.lights { display: flex; gap: 16px; width: 176px; flex: none; padding-left: 40px; }
.lights i { width: 24px; height: 24px; border-radius: 50%; }
.red { background: #ec6a5e; }
.yellow { background: #f4bf4f; }
.green { background: #61c554; }
.pin { flex: none; width: 92px; height: 40px; display: flex; align-items: center; justify-content: center; padding-left: 4px; border-right: 3px solid #303e34; }
.pin.last, .pin.active { border-color: transparent; }
.pin.active { position: relative; }
.shape { position: absolute; width: 128px; height: 68px; left: -18px; top: -9px; }
.front { position: relative; }
.kan { width: 32px; height: 32px; border-radius: 4px; background: #000; color: #fff; font-size: 12px; font-weight: 600; line-height: 32px; text-align: center; }
.bluebg { background: var(--blue); }
.tab { flex: 0 1 477px; min-width: 0; height: 32px; display: flex; align-items: center; padding: 0 26px 0 22px; border-right: 3px solid #303e34; }
.tab span { flex: 1; min-width: 0; overflow: hidden; white-space: nowrap; margin: 0 20px 0 16px; line-height: 32px; mask-image: linear-gradient(90deg, #000 calc(100% - 44px), transparent); }
.tab button svg { width: 22px; height: 22px; }
.newtab { margin-left: 18px; }
.newtab svg { width: 24px; height: 24px; }
.tabsearch { margin-left: auto; margin-right: 10px; width: 56px; height: 56px; border-radius: 16px; background: #303e34; display: grid; place-items: center; color: #dfe9e1; }
.tabsearch svg { width: 18px; height: 18px; }
.chrome { flex: none; background: #303e34; border-bottom: 2px solid #424c46; border-radius: 16px 16px 0 0; }
.addressrow { height: 92px; display: flex; align-items: center; padding: 0 28px 0 26px; gap: 36px; }
.nav, .ext { display: flex; align-items: center; gap: 40px; }
.nav svg { width: 32px; height: 32px; }
.forward { transform: scaleX(-1); opacity: .45; }
.omnibox { flex: 1; height: 68px; border-radius: 34px; background: #1c281f; display: flex; align-items: center; padding: 0 30px 0 10px; font-size: 28px; }
.site { width: 48px; height: 48px; border-radius: 50%; background: #303e34; display: grid; place-items: center; margin-right: 16px; color: #dfe9e1; }
.site svg { width: 28px; height: 28px; }
.url em { font-style: normal; color: #e6eee8; }
.fav { width: 32px; height: 32px; margin-left: auto; color: #9dd9ae; }
.ext { gap: 36px; }
.ext svg { width: 36px; height: 36px; }
.ext i { width: 2px; height: 32px; background: #4d5b51; }
.profile { width: 40px; height: 40px; margin: 0 2px 0 -4px; border-radius: 50%; background: #3c6b22; color: #fff; font-size: 20px; text-align: center; }
.ext .kebab { width: 28px; height: 32px; }
.bookmarks { display: flex; gap: 36px; height: 68px; padding: 0 26px 12px; align-items: center; font-size: 24px; }
.bookmarks a { display: flex; align-items: center; gap: 16px; }
.bookmarks svg { width: 32px; height: 28px; }

/* App */
.app { flex: 1; min-height: 0; display: flex; background: var(--bg); color: var(--text); }
.rail { flex: none; width: 178px; border-right: 2px solid var(--line); display: flex; flex-direction: column; font-size: 24px; font-weight: 500; }
.railtop { display: flex; flex-direction: column; align-items: center; padding: 30px 2px 16px 0; border-bottom: 2px solid var(--line); }
.space { width: 64px; height: 64px; border-radius: 12px; background: var(--blue); color: #fff; font-size: 28px; margin-bottom: 16px; }
.env { width: 116px; height: 64px; display: flex; align-items: center; justify-content: center; gap: 8px; border-bottom: 8px solid; border-radius: 6px; margin-bottom: 14px; }
.env svg { width: 22px; height: 26px; color: var(--sky); }
.v1 { border-color: #faf2cf; }
.v1 svg { color: var(--blue); }
.live { border-color: #357f17; }
.chat { width: 118px; height: 56px; border-radius: 8px; background: var(--raised); display: flex; align-items: center; justify-content: center; gap: 14px; font-weight: 600; }
.chat svg { width: 26px; height: 26px; color: var(--sky); }
.find { width: 114px; height: 56px; margin-top: 30px; border: 2px solid var(--line); border-radius: 8px; display: grid; place-items: center; color: var(--muted); }
.find svg { width: 30px; height: 30px; }
.railnav { flex: 1; display: flex; flex-direction: column; align-items: center; gap: 32px; padding: 32px 2px 0 0; }
.railnav a { width: 56px; height: 56px; border-radius: 10px; display: grid; place-items: center; color: var(--sky); }
.railnav svg { width: 28px; height: 28px; }
.railnav .on { background: var(--blue); color: #fff; }
.railnav.foot { flex: none; border-top: 2px solid var(--line); padding: 32px 2px 25px 0; }
.railnav .boxed { width: 66px; border: 2px solid var(--sky); border-radius: 8px; }
.railnav .grey { color: #8f9394; margin-top: 11px; }

.main { flex: 1; min-width: 0; display: flex; flex-direction: column; }
.pagehead { display: flex; justify-content: space-between; align-items: center; height: 170px; flex: none; padding: 0 30px; border-bottom: 2px solid var(--line); }
.titles { padding-top: 6px; }
.pagehead h1 { font-size: 44px; line-height: 52px; font-weight: 700; }
.pagehead small { font-size: 28px; font-weight: 400; color: var(--muted); margin-left: 10px; }
.pagehead p { color: var(--muted); margin-top: 3px; }
.headactions { display: flex; align-items: center; gap: 16px; }
.headactions i { width: 2px; height: 64px; background: var(--line); }
.avatar { width: 56px; height: 56px; margin-right: 2px; border-radius: 50%; background: #e3f6dc; color: #212527; font-size: 24px; font-weight: 600; line-height: 56px; text-align: center; }
.run { height: 78px; padding: 0 30px 0 34px; border-radius: 10px; background: var(--blue); color: #fff; font-weight: 500; display: flex; align-items: center; gap: 22px; }
.run svg { width: 24px; height: 28px; }
.more { width: 88px; height: 78px; border-radius: 10px; background: var(--raised); display: grid; place-items: center; }
.more svg { width: 28px; height: 8px; }
.tools { height: 74px; flex: none; display: flex; align-items: center; gap: 12px; padding: 0 18px 0 16px; border-bottom: 2px solid var(--line); font-size: 24px; font-weight: 500; }
.tools button { height: 56px; padding: 0 16px; border-radius: 6px; display: flex; align-items: center; gap: 10px; white-space: nowrap; }
.tools svg { width: 26px; height: 26px; }
.tools .slim { width: 14px; height: 24px; }
.tools .wide { width: 28px; }
.tools .back { font-weight: 700; }
.tools .video { background: var(--navy); color: var(--sky); }
.tools .fold { margin-left: auto; padding: 0; color: var(--blue); }
.canvas { flex: 1; min-height: 0; display: flex; background: var(--mid); }
.scroller { flex: 1; min-width: 0; overflow: hidden; }
.bar { width: 20px; padding-top: 297px; background: #c1c3c2; }
.bar i { display: block; height: 51%; background: #848685; }
.stack { max-width: 1878px; min-height: 100%; margin: 0 auto; border: solid var(--line); border-width: 0 2px; }
.intro { height: 88px; padding: 5px 84px; background: var(--bg); color: var(--muted); border-bottom: 2px solid var(--line); }
.filter { height: 112px; display: flex; align-items: center; gap: 16px; padding: 0 14px 0 48px; border-bottom: 2px solid var(--line); color: #b9bcbd; }
.filter p { flex: 1; }
kbd { font: inherit; border: 2px solid var(--line); padding: 6px; }
.filter button { height: 56px; padding: 0 18px 0 20px; border-radius: 8px; background: var(--raised); color: var(--text); font-size: 24px; font-weight: 500; display: flex; align-items: center; gap: 8px; }
.filter button svg { width: 26px; height: 26px; }
.filter input { width: 368px; height: 78px; border: 2px solid var(--line); border-radius: 10px; background: var(--bg); padding: 0 24px; }
.filter input::placeholder { color: #a0a4a5; }

.steps { list-style: none; padding: 20px 20px 0 0; display: grid; gap: 40px; }
.step { display: grid; grid-template-columns: 74px 1fr; }
.num { padding: 8px 0 0 18px; font-size: 24px; line-height: 28px; color: var(--soft); }
.card { position: relative; display: flex; border: 2px solid var(--line); border-radius: 6px; background: var(--bg); padding: 22px 24px 24px 0; }
.card.plain { padding-bottom: 22px; }
.card h2 { font-size: 28px; line-height: 42px; font-weight: 700; white-space: nowrap; }
.kind { width: 32px; height: 32px; margin: 16px 32px 16px 34px; }
.kind.cloud { width: 36px; margin: 16px 30px 16px 32px; }
.body { flex: 1; }
.line { min-height: 66px; display: flex; align-items: center; gap: 9px; }
.chips { display: flex; gap: 13px; margin-top: 10px; }
.chip { height: 66px; border: 2px solid var(--line); border-radius: 10px; background: var(--mid); color: #b4b7b8; padding: 11px 16px; white-space: pre; }
.chip i { display: inline-block; width: 2px; height: 34px; background: currentColor; margin: 0 3px; vertical-align: -7px; }
.ret { align-self: center; color: #9ea2a3; white-space: nowrap; }
.ret b { font-size: 32px; color: var(--orange); }
.off { background: var(--raised); color: #84888a; }
.off .chip { background: none; color: #84888a; }
.selected { background: var(--navy); border-color: var(--blue); border-radius: 0; }
.grip, .actions, .add { position: absolute; background: var(--navy); border: 2px solid var(--blue); color: var(--sky); }
.grip { left: -94px; top: -2px; width: 94px; height: 120px; border-radius: 12px 0 0 12px; display: grid; place-items: center; }
.grip svg { width: 20px; height: 28px; }
.actions { left: 100%; top: -2px; width: 94px; height: 240px; padding: 2px 0 0 2px; border-radius: 0 12px 12px 0; display: grid; grid-auto-rows: 1fr; }
.actions button { display: grid; place-items: center; }
.actions svg { width: 30px; height: 30px; }
.add { left: calc(50% + 26px); bottom: -26px; transform: translateX(-50%); width: 52px; height: 52px; border-radius: 50%; display: grid; place-items: center; }
.add svg { width: 26px; height: 26px; }
.branch { display: block; padding-right: 0; }
.cond { display: flex; }
.if, .then { display: flex; align-items: center; gap: 10px; font-weight: 500; }
.if { margin-top: 10px; line-height: 42px; }
.if svg { width: 33px; height: 26px; }
.then { margin-top: 10px; }
.then svg { width: 34px; height: 32px; }
.then .chev { width: 26px; height: 26px; }
.toggle { width: 26px; height: 26px; margin: 7px 23px 0 0; color: var(--soft); }
.nested { grid-template-columns: 100px 1fr; padding-right: 44px; margin-top: 22px; }
.nested .num { padding-left: 16px; }

/* Inspector */
.panel { flex: none; width: 1198px; border-left: 2px solid var(--line); display: flex; flex-direction: column; }
.panelbody { flex: 1; min-height: 0; padding: 32px 30px; overflow: hidden; }
.panel header { display: flex; justify-content: space-between; align-items: center; margin-bottom: 49px; }
.panel h2 { display: flex; align-items: center; font-size: 36px; line-height: 44px; font-weight: 600; }
.panel h2 svg { width: 40px; height: 40px; margin: 0 12px; }
.panel h2 .gold { width: 32px; height: 32px; margin: 0 16px; color: #e0bf48; }
.panel header button { padding-right: 6px; color: #a3a6a7; }
.panel header button svg { width: 30px; height: 30px; }
.panel h3 { font-size: 32px; line-height: 40px; font-weight: 600; }
.panel p { color: var(--soft); }
.form { display: grid; grid-template-columns: 280px 1fr; row-gap: 32px; margin-top: 49px; padding-left: 16px; }
.name { align-self: center; font-size: 24px; line-height: 30px; padding-bottom: 6px; color: var(--soft); }
.field { position: relative; height: 116px; border: 2px solid var(--line); border-radius: 10px; padding: 16px 24px; display: flex; flex-direction: column; gap: 6px; }
.params .field { gap: 4px; }
.field label { font-size: 24px; line-height: 30px; color: #96999b; }
.field input, .field select { appearance: none; background: none; border: 0; outline: 0; padding: 0; margin: 0; height: 40px; line-height: 40px; width: 100%; }
.field svg { position: absolute; right: 14px; top: 46px; width: 24px; height: 24px; }
.filterset { grid-column: 2; margin-top: -12px; display: grid; gap: 20px; }
.get { height: 66px; border-radius: 10px; background: var(--blue); color: #fff; font-weight: 700; text-align: left; padding: 0 20px; }
.params { border-left: 2px solid var(--line); padding-left: 32px; display: grid; gap: 20px; }
.panel footer { height: 142px; flex: none; border-top: 2px solid var(--line); padding: 2px 30px 0; display: flex; justify-content: space-between; align-items: center; }
.delete, .save { height: 78px; border-radius: 10px; display: grid; place-items: center; }
.delete { width: 88px; background: #b72d44; }
.delete svg { width: 26px; height: 30px; color: #fff; }
.save { width: 116px; background: var(--blue); color: #fff; font-weight: 600; }
```
